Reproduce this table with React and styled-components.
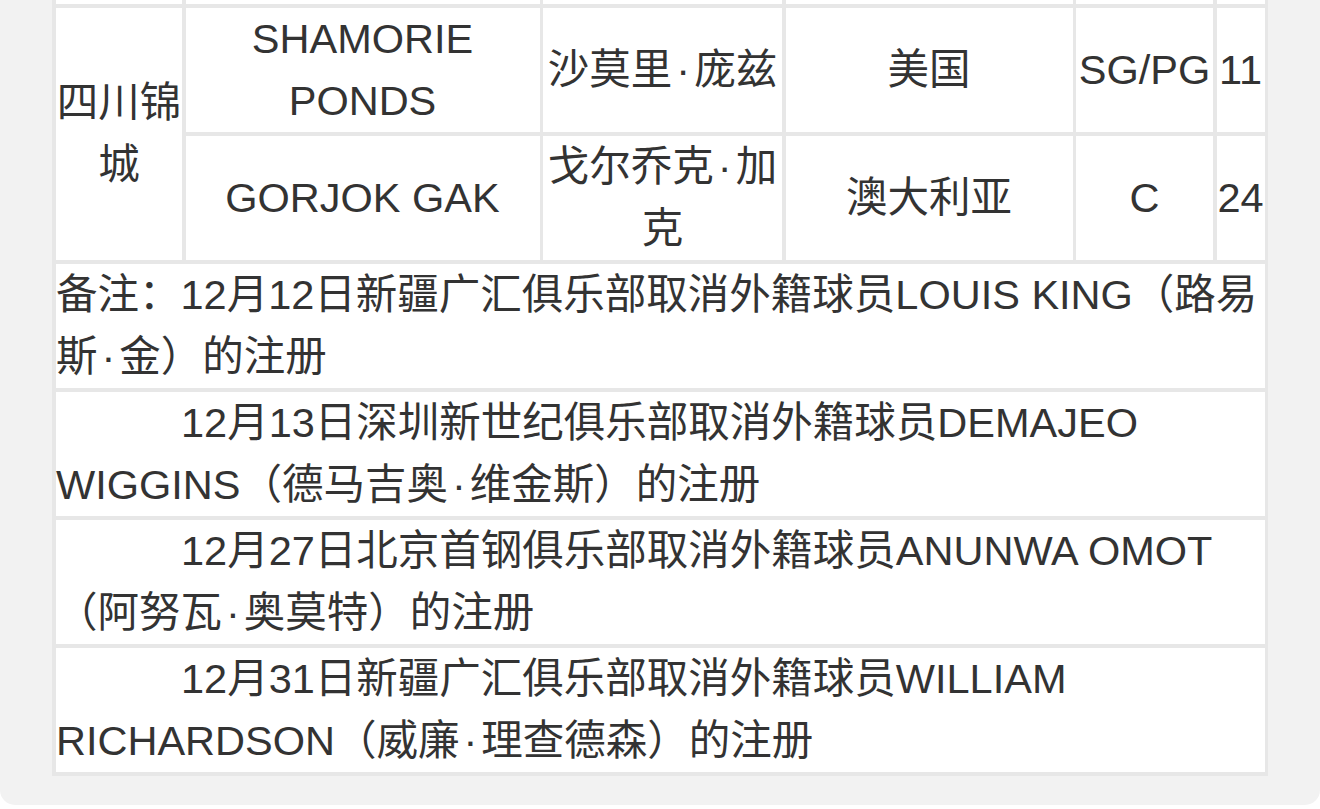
import React from "react";
import styled, { createGlobalStyle } from "styled-components";

const GlobalStyle = createGlobalStyle`
  html, body {
    margin: 0;
    padding: 0;
    background: #ffffff;
  }
  body {
    font-family: "Liberation Sans", "Noto Sans CJK SC", sans-serif;
    color: #333333;
  }
`;

const Page = styled.div`
  background: #f2f2f2;
  border-radius: 0 0 15px 15px;
  padding: 0 52px 29px 52px;
`;

const Table = styled.div`
  display: grid;
  grid-template-columns: 126px 354px 239px 287px 137px 48px;
  column-gap: 3.5px;
  row-gap: 4px;
  width: max-content;
  padding: 0 3.5px 4px 4px;
  background: #e7e7e7;
  font-family: "Liberation Sans", "Noto Sans CJK SC", sans-serif;
  font-size: 41.5px;
  line-height: 62px;
  color: #333333;
  text-spacing-trim: space-all;
`;

const StubCell = styled.div`
  height: 4px;
  background: #ffffff;
`;

const Cell = styled.div`
  background: #ffffff;
  display: flex;
  align-items: center;
  justify-content: center;
  text-align: center;
  min-height: 124px;
  grid-row: ${(p) => (p.$rows ? `span ${p.$rows}` : "auto")};
`;

const CellText = styled.span`
  display: block;
`;

const NoteCell = styled.div`
  grid-column: 1 / -1;
  background: #ffffff;
  min-height: 124px;
  text-align: left;
  text-indent: ${(p) => (p.$indent ? "125px" : "0")};
`;

const Dot = styled.span`
  padding: 0 4px;
`;

function withDots(text) {
  const parts = text.split("·");
  return parts.map((part, i) => (
    <React.Fragment key={i}>
      {part}
      {i < parts.length - 1 && <Dot>·</Dot>}
    </React.Fragment>
  ));
}

const players = [
  { en: "SHAMORIE PONDS", cn: "沙莫里·庞兹", nation: "美国", pos: "SG/PG", num: "11" },
  { en: "GORJOK GAK", cn: "戈尔乔克·加克", nation: "澳大利亚", pos: "C", num: "24" },
];

const notes = [
  { text: "备注：12月12日新疆广汇俱乐部取消外籍球员LOUIS KING（路易斯·金）的注册", indent: false },
  { text: "12月13日深圳新世纪俱乐部取消外籍球员DEMAJEO WIGGINS（德马吉奥·维金斯）的注册", indent: true },
  { text: "12月27日北京首钢俱乐部取消外籍球员ANUNWA OMOT（阿努瓦·奥莫特）的注册", indent: true },
  { text: "12月31日新疆广汇俱乐部取消外籍球员WILLIAM RICHARDSON（威廉·理查德森）的注册", indent: true },
];

export default function App() {
  return (
    <>
      <GlobalStyle />
      <Page>
        <Table>
          {Array.from({ length: 6 }).map((_, i) => (
            <StubCell key={`s${i}`} />
          ))}
          {players.map((p, i) => (
            <React.Fragment key={p.en}>
              {i === 0 && (
                <Cell $rows={2}>
                  <CellText>四川锦城</CellText>
                </Cell>
              )}
              <Cell>
                <CellText>{p.en}</CellText>
              </Cell>
              <Cell>
                <CellText>{withDots(p.cn)}</CellText>
              </Cell>
              <Cell>
                <CellText>{p.nation}</CellText>
              </Cell>
              <Cell>
                <CellText>{p.pos}</CellText>
              </Cell>
              <Cell>
                <CellText>{p.num}</CellText>
              </Cell>
            </React.Fragment>
          ))}
          {notes.map((n) => (
            <NoteCell key={n.text} $indent={n.indent}>
              {withDots(n.text)}
            </NoteCell>
          ))}
        </Table>
      </Page>
    </>
  );
}
